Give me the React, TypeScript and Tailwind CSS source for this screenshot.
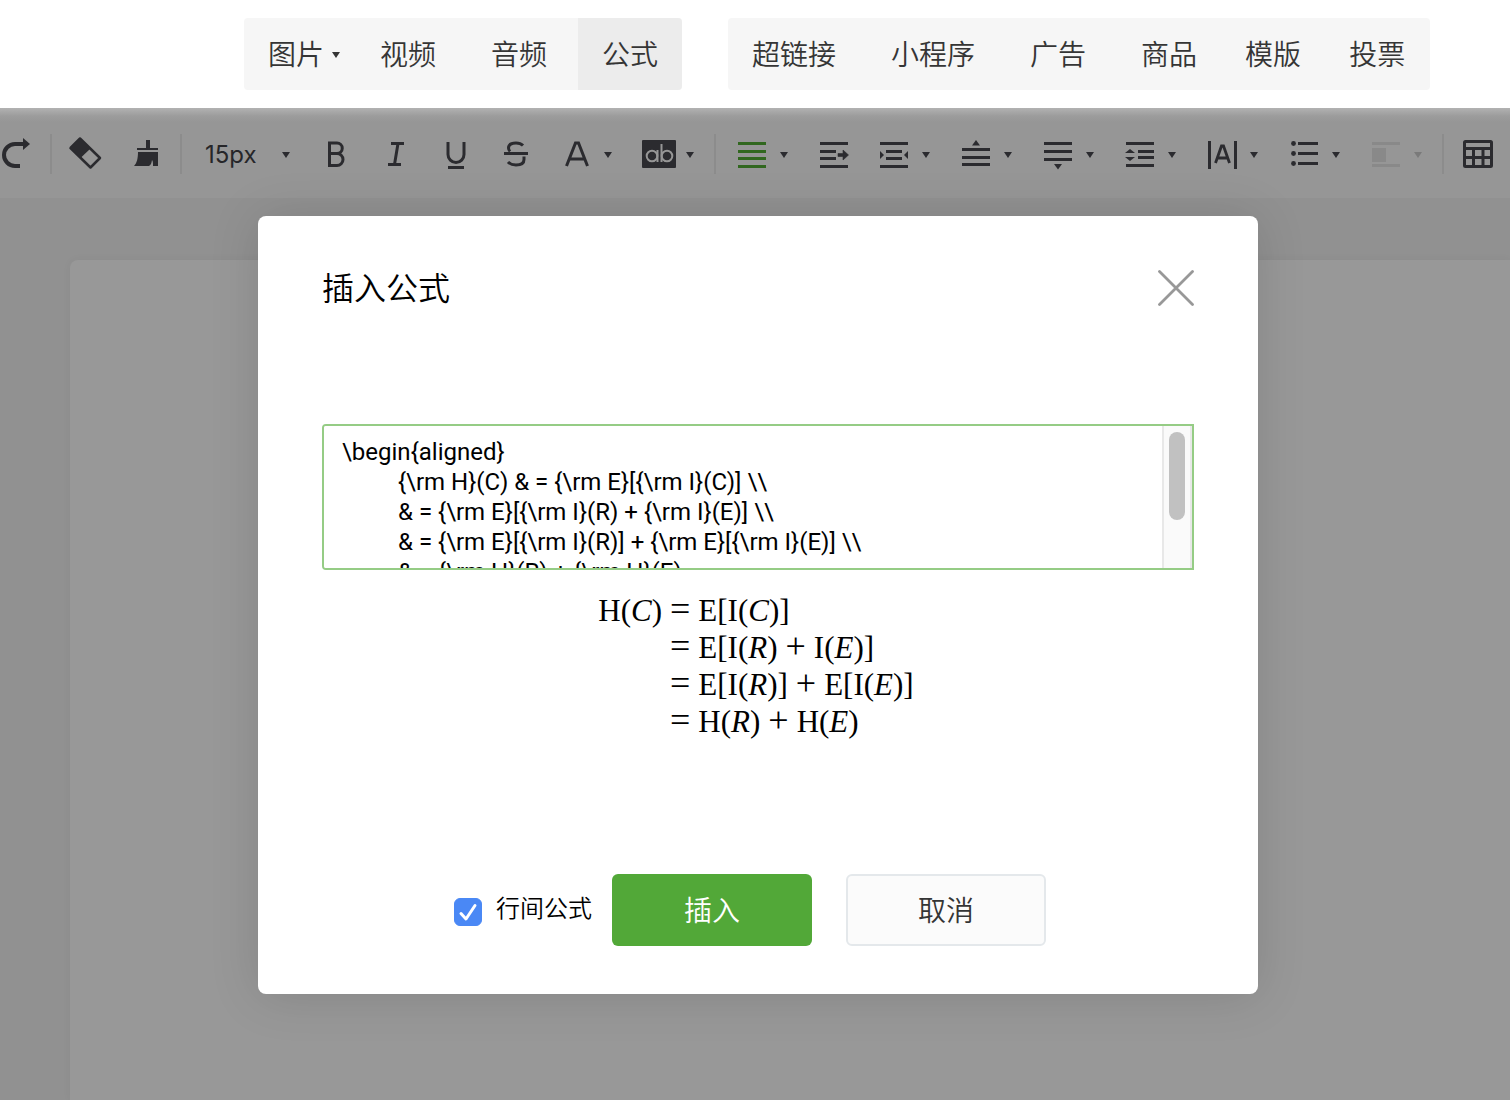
import { useState, type ReactNode } from "react";

type Tool = {
  name: string;
  icon: ReactNode;
  menu?: boolean;
  tone?: string;
};

const bar = (x: number, y: number, w: number) => (
  <rect key={`${x}-${y}`} x={x} y={y} width={w} height={3} fill="currentColor" />
);

const stroke = {
  fill: "none",
  stroke: "currentColor",
  strokeWidth: 3,
} as const;

const redo: Tool = {
  name: "重做",
  icon: (
    <>
      <path d="M22 30H17a11 11 0 0 1 0-22h9" {...stroke} strokeWidth={4} />
      <path d="M25 2l7 6-7 6z" fill="currentColor" />
    </>
  ),
};

const cleanup: Tool[] = [
  {
    name: "清除格式",
    icon: (
      <>
        <path d="M12 2.500L32 22 22.500 31.500 2.500 12z" {...stroke} strokeWidth={2.5} strokeLinejoin="round" />
        <path d="M12 2l10.500 10.500-10 9.500L2 12z" fill="currentColor" />
      </>
    ),
  },
  {
    name: "格式刷",
    icon: (
      <path
        d="M18 4h4v8h8v2H9v-2h9zM10 16h20v14h-5c0-3 0-5-1-6-.5 3-1 5-3 6H6c3-3 4-8 4-14z"
        fill="currentColor"
      />
    ),
  },
];

const textTools: Tool[] = [
  {
    name: "加粗",
    icon: <path d="M11.500 17.500V7H19a5 5 0 0 1 0 10.500h-7.500V29.500H19a6 6 0 0 0 0-12" {...stroke} />,
  },
  {
    name: "斜体",
    icon: <path d="M13 7.500h13M10 28.500h13M20 7.500l-3.500 21" {...stroke} />,
  },
  {
    name: "下划线",
    icon: (
      <>
        <path d="M10 6v12.500a8 8 0 0 0 16 0V6" {...stroke} />
        {bar(10, 30, 16)}
      </>
    ),
  },
  {
    name: "删除线",
    icon: (
      <>
        <path
          d="M25 9.500C23 7.500 21 7 18 7c-5 0-7.500 2-7.500 5 0 1.500.5 2.500 1.500 3.500M10 26c2 2.200 4.500 3 8 3 5 0 8-2 8-5.500V20.500"
          {...stroke}
        />
        {bar(6, 16, 24)}
      </>
    ),
  },
  {
    name: "字体颜色",
    menu: true,
    icon: <path d="M8.500 30L17.500 7h3l9 23M11.500 23h15" {...stroke} />,
  },
  {
    name: "背景色",
    menu: true,
    icon: (
      <>
        <rect x="2" y="4" width="34" height="28" rx="1" fill="currentColor" />
        <g fill="none" stroke="#969696" strokeWidth="2">
          <circle cx="12" cy="20" r="5.300" />
          <path d="M17.500 14v12M21.500 8v18" />
          <circle cx="27" cy="20" r="5.300" />
        </g>
      </>
    ),
  },
];

const blockTools: Tool[] = [
  {
    name: "对齐方式",
    menu: true,
    tone: "text-[#31671f]",
    icon: <>{[6, 14, 21, 29].map((y) => bar(4, y, 28))}</>,
  },
  {
    name: "首行缩进",
    icon: (
      <>
        {bar(4, 6, 28)}
        {bar(4, 14, 16)}
        {bar(4, 21, 16)}
        {bar(4, 29, 28)}
        <path d="M22 17.500h5v-3.500l5.500 5-5.500 5v-3.500h-5z" fill="currentColor" stroke="currentColor" strokeWidth="0.600" />
      </>
    ),
  },
  {
    name: "两端缩进",
    menu: true,
    icon: (
      <>
        {bar(4, 6, 28)}
        {bar(10, 14, 16)}
        {bar(10, 21, 16)}
        {bar(4, 29, 28)}
        <path d="M4 15l4 4-4 4zM32 15l-4 4 4 4z" fill="currentColor" />
      </>
    ),
  },
  {
    name: "段前距",
    menu: true,
    icon: (
      <>
        {[12, 20, 27].map((y) => bar(4, y, 28))}
        <path d="M14 9.500l4-5.500 4 5.500z" fill="currentColor" />
      </>
    ),
  },
  {
    name: "段后距",
    menu: true,
    icon: (
      <>
        {[6, 14, 22].map((y) => bar(4, y, 28))}
        <path d="M14 28h8l-4 5.500z" fill="currentColor" />
      </>
    ),
  },
  {
    name: "行间距",
    menu: true,
    icon: (
      <>
        {bar(4, 6, 28)}
        {bar(16, 14, 16)}
        {bar(16, 20, 16)}
        {bar(4, 28, 28)}
        <path d="M3 17l5-4 5 4zM3 21h10l-5 4z" fill="currentColor" />
      </>
    ),
  },
  {
    name: "字间距",
    menu: true,
    icon: (
      <>
        <path d="M5.500 5v28M31.500 5v28" {...stroke} />
        <path d="M11.500 27L17.500 10h2l6 17M13.500 22h10" {...stroke} strokeWidth={2.8} />
      </>
    ),
  },
  {
    name: "列表",
    menu: true,
    icon: (
      <>
        {[6, 16, 26].map((y) => (
          <g key={y}>
            <circle cx="7.500" cy={y + 1.5} r="2.400" fill="currentColor" />
            {bar(12, y, 20)}
          </g>
        ))}
      </>
    ),
  },
  {
    name: "图文环绕",
    menu: true,
    tone: "text-[#898989]",
    icon: (
      <>
        {bar(4, 6, 28)}
        <rect x="4" y="12" width="14" height="14" fill="currentColor" />
        {bar(4, 28, 28)}
      </>
    ),
  },
];

const table: Tool = {
  name: "表格",
  icon: (
    <>
      <rect x="4.500" y="5.500" width="27" height="25" rx="1" {...stroke} />
      <path d="M4 12.500h28M4 21.500h28M13.500 12v19M23 12v19" {...stroke} />
    </>
  ),
};

function Caret({ className = "" }: { className?: string }) {
  return (
    <svg viewBox="0 0 10 36" className={`h-9 w-2.5 shrink-0 ${className}`} aria-hidden="true">
      <path d="M1 16h8l-4 6z" fill="currentColor" />
    </svg>
  );
}

function ToolButton({ tool }: { tool: Tool }) {
  return (
    <button
      type="button"
      aria-label={tool.name}
      className={`flex h-[60px] shrink-0 items-center pl-3 ${tool.menu ? "w-[82px]" : "w-[60px]"} ${tool.tone ?? ""}`}
    >
      <svg viewBox="0 0 36 36" className="size-9 shrink-0" aria-hidden="true">
        {tool.icon}
      </svg>
      {tool.menu && (
        <Caret className={`ml-[9px] ${tool.tone === "text-[#898989]" ? "text-[#7a7a7a]" : "text-[#2b2b2f]"}`} />
      )}
    </button>
  );
}

function Separator({ gap = "mx-1" }: { gap?: string }) {
  return <span className={`h-10 w-0.5 shrink-0 bg-[#8c8c8c] ${gap}`} />;
}

function InsertButton({ label, active = false }: { label: string; active?: boolean }) {
  return (
    <button type="button" className={`h-[72px] shrink-0 rounded-r-sm px-6 pt-0.5 ${active ? "bg-[#ececec]" : ""}`}>
      {label}
    </button>
  );
}

function Header() {
  return (
    <header className="flex h-[108px] items-center bg-white pl-[244px] text-[28px] font-[350] whitespace-nowrap text-[#353535]">
      <div className="flex gap-[7px] rounded bg-[#f6f6f6]">
        <button type="button" className="flex h-[72px] w-[105px] shrink-0 items-center pl-6">
          <span className="pt-0.5">图片</span>
          <Caret className="ml-[7px]" />
        </button>
        <InsertButton label="视频" />
        <InsertButton label="音频" />
        <InsertButton label="公式" active />
      </div>
      <div className="ml-[46px] flex rounded bg-[#f6f6f6] pr-px">
        <div className="flex gap-[7px]">
          <InsertButton label="超链接" />
          <InsertButton label="小程序" />
          <InsertButton label="广告" />
          <InsertButton label="商品" />
        </div>
        <InsertButton label="模版" />
        <InsertButton label="投票" />
      </div>
    </header>
  );
}

function Toolbar() {
  return (
    <div className="h-[90px] overflow-hidden bg-[#969696] bg-[linear-gradient(to_bottom,#b2b2b2,#9c9c9c_8px,#969696_14px)] pt-0.5 text-[#2b2b2f]">
      <div className="-ml-3.5 flex h-full items-center">
        <ToolButton tool={redo} />
        <Separator />
        {cleanup.map((t) => (
          <ToolButton key={t.name} tool={t} />
        ))}
        <Separator />
        <div className="relative w-[120px] shrink-0">
          <select
            aria-label="字号"
            defaultValue="15px"
            className="h-[60px] w-full appearance-none bg-transparent pt-0.5 pl-[19px] text-2xl text-[#262629] outline-none"
          >
            <option>14px</option>
            <option>15px</option>
            <option>16px</option>
          </select>
          <Caret className="pointer-events-none absolute top-3 right-[15px]" />
        </div>
        {textTools.map((t) => (
          <ToolButton key={t.name} tool={t} />
        ))}
        <Separator gap="mr-1.5 ml-1" />
        {blockTools.map((t) => (
          <ToolButton key={t.name} tool={t} />
        ))}
        <Separator />
        <ToolButton tool={table} />
      </div>
    </div>
  );
}

const source = String.raw`\begin{aligned}
	{\rm H}(C) & = {\rm E}[{\rm I}(C)] \\
	& = {\rm E}[{\rm I}(R) + {\rm I}(E)] \\
	& = {\rm E}[{\rm I}(R)] + {\rm E}[{\rm I}(E)] \\
	& = {\rm H}(R) + {\rm H}(E)
\end{aligned}
`;

const equations = [
  ["H(C)", "E[I(C)]"],
  ["", "E[I(R)+I(E)]"],
  ["", "E[I(R)]+E[I(E)]"],
  ["", "H(R)+H(E)"],
];

function MathText({ text }: { text: string }) {
  return text.split(/(\([CRE]\)|\+)/).map((part, i) => {
    if (part === "+") {
      return (
        <span key={i} className="mx-2 text-[36px] leading-0">
          +
        </span>
      );
    }
    if (part.startsWith("(")) {
      return (
        <span key={i}>
          (<i>{part[1]}</i>)
        </span>
      );
    }
    return <span key={i}>{part}</span>;
  });
}

function Formula() {
  return (
    <div className="grid grid-cols-[auto_auto_auto] content-start justify-center gap-x-2 pr-1 font-['Liberation_Serif',serif] text-[31px] leading-[37px] whitespace-nowrap">
      {equations.map(([left, right]) => (
        <div key={right} className="contents">
          <span className="text-right">
            <MathText text={left} />
          </span>
          <span>
            <span className="text-[36px] leading-0">=</span>
          </span>
          <span>
            <MathText text={right} />
          </span>
        </div>
      ))}
    </div>
  );
}

function FormulaDialog() {
  const [value, setValue] = useState(source);
  const [block, setBlock] = useState(true);
  return (
    <section
      role="dialog"
      aria-labelledby="dialog-title"
      className="w-full max-w-[1000px] rounded-lg bg-white px-16 py-12 shadow-[0_2px_50px_rgba(0,0,0,0.13)]"
    >
      <div className="flex h-12 items-center justify-between">
        <h2 id="dialog-title" className="pt-0.5 text-[32px] font-[350] text-black">
          插入公式
        </h2>
        <button type="button" aria-label="关闭">
          <svg viewBox="0 0 36 36" className="size-9" aria-hidden="true">
            <path d="M1.500 1.500l33 33M34.500 1.500l-33 33" stroke="#989898" strokeWidth="2.800" strokeLinecap="round" />
          </svg>
        </button>
      </div>

      <div className="relative mt-28">
        <textarea
          aria-label="公式代码"
          value={value}
          onChange={(e) => setValue(e.target.value)}
          spellCheck={false}
          className="block h-[146px] w-full resize-none rounded-l border-2 border-[#95cc85] bg-white py-[11px] pr-10 pl-[18px] font-[Roboto,sans-serif] text-2xl leading-[30px] text-black outline-none [scrollbar-width:none] [tab-size:56px]"
        />
        <div
          aria-hidden="true"
          className="pointer-events-none absolute inset-y-0.5 right-0.5 w-[30px] border-x-2 border-[#e8e8e8] bg-[#fafafa] px-[5px] py-1.5"
        >
          <div className="h-[88px] w-4 rounded-full bg-[#c1c1c1]" />
        </div>
      </div>

      <div className="mt-[22px] min-h-[282px]">
        <Formula />
      </div>

      <div className="flex items-center justify-center pr-4 text-[28px] font-[350]">
        <label className="mr-5 flex items-center gap-3.5 text-2xl text-black">
          <span className="relative mt-1 size-7">
            <input
              type="checkbox"
              checked={block}
              onChange={(e) => setBlock(e.target.checked)}
              className="peer block size-7 appearance-none rounded-md border border-[#b5b5b5] checked:border-[#4a88f5] checked:bg-[#4a88f5]"
            />
            <svg
              viewBox="0 0 28 28"
              className="pointer-events-none absolute inset-0 hidden size-7 peer-checked:block"
              aria-hidden="true"
            >
              <path
                d="M7 15.500l5 5.500L21 7.500"
                fill="none"
                stroke="#fff"
                strokeWidth="3"
                strokeLinecap="round"
                strokeLinejoin="round"
              />
            </svg>
          </span>
          <span className="pb-0.5">行间公式</span>
        </label>
        <button type="button" className="h-[72px] w-[200px] rounded-md bg-[#52a838] pt-0.5 text-white">
          插入
        </button>
        <button
          type="button"
          className="ml-[34px] h-[72px] w-[200px] rounded-md border-2 border-[#e4e8eb] bg-[#fbfbfb] pt-0.5 text-[#353535]"
        >
          取消
        </button>
      </div>
    </section>
  );
}

export default function App() {
  return (
    <div className="flex min-h-screen flex-col overflow-hidden font-[Inter,'Noto_Sans_CJK_SC',sans-serif]">
      <Header />
      <main className="relative flex grow flex-col bg-[#919191]">
        <Toolbar />
        <div className="mt-[62px] ml-[70px] grow rounded-tl-lg bg-[#989898] shadow-[0_0_10px_rgba(0,0,0,0.04)]" />
        <div className="absolute inset-0 flex items-start justify-center pt-[108px] pl-1.5">
          <FormulaDialog />
        </div>
      </main>
    </div>
  );
}
